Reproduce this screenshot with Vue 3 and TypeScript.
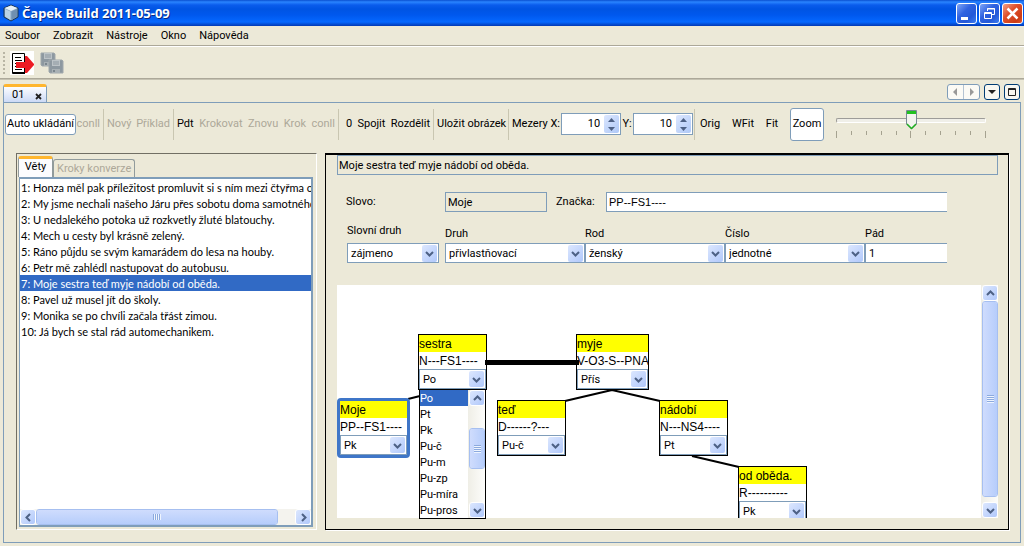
<script setup lang="ts">
import { ref } from 'vue'

interface Tool { label: string; enabled?: boolean; framed?: boolean }
interface ToolGroup { name: string; tools: Tool[] }
interface TreeNode { id: string; word: string; tag: string; role: string; x: number; y: number; wide?: boolean; selected?: boolean }

const menus = ['Soubor', 'Zobrazit', 'Nástroje', 'Okno', 'Nápověda']

const groups: ToolGroup[] = [
  { name: 'save', tools: [{ label: 'Auto ukládání', enabled: true, framed: true }, { label: 'conll' }] },
  { name: 'new', tools: [{ label: 'Nový' }, { label: 'Příklad' }] },
  { name: 'steps', tools: [{ label: 'Pdt', enabled: true }, { label: 'Krokovat' }, { label: 'Znovu' }, { label: 'Krok' }, { label: 'conll' }] },
  { name: 'join', tools: [{ label: '0', enabled: true }, { label: 'Spojit', enabled: true }, { label: 'Rozdělit', enabled: true }] },
  { name: 'image', tools: [{ label: 'Uložit obrázek', enabled: true }] },
]

const sentences = [
  'Honza měl pak příležitost promluvit si s ním mezi čtyřma oči',
  'My jsme nechali našeho Járu přes sobotu doma samotného',
  'U nedalekého potoka už rozkvetly žluté blatouchy.',
  'Mech u cesty byl krásně zelený.',
  'Ráno půjdu se svým kamarádem do lesa na houby.',
  'Petr mě zahlédl nastupovat do autobusu.',
  'Moje sestra teď myje nádobí od oběda.',
  'Pavel už musel jít do školy.',
  'Monika se po chvíli začala třást zimou.',
  'Já bych se stal rád automechanikem.',
]
const current = ref(6)

const categories = [
  { id: 'pos', label: 'Slovní druh', value: 'zájmeno' },
  { id: 'kind', label: 'Druh', value: 'přivlastňovací' },
  { id: 'gender', label: 'Rod', value: 'ženský' },
  { id: 'number', label: 'Číslo', value: 'jednotné' },
  { id: 'case', label: 'Pád', value: '1' },
]

const nodes: TreeNode[] = [
  { id: 'sestra', word: 'sestra', tag: 'N---FS1----', role: 'Po', x: 81, y: 49 },
  { id: 'myje', word: 'myje', tag: 'V-O3-S--PNA', role: 'Přís', x: 239, y: 49, wide: true },
  { id: 'moje', word: 'Moje', tag: 'PP--FS1----', role: 'Pk', x: 0, y: 113, selected: true },
  { id: 'ted', word: 'teď', tag: 'D------?---', role: 'Pu-č', x: 160, y: 115 },
  { id: 'nadobi', word: 'nádobí', tag: 'N---NS4----', role: 'Pt', x: 322, y: 115 },
  { id: 'obed', word: 'od oběda.', tag: 'R----------', role: 'Pk', x: 401, y: 181 },
]
const roles = ['Po', 'Pt', 'Pk', 'Pu-č', 'Pu-m', 'Pu-zp', 'Pu-míra', 'Pu-pros']
const role = ref('Po')

const gapX = ref('10')
const gapY = ref('10')
const zoom = ref(50)
</script>

<template>
  <div class="window">
    <header class="titlebar">
      <svg class="app-icon" viewBox="0 0 16 18" width="16" height="18" aria-hidden="true">
        <path d="M8 1 15 4V13L8 17 1 13V4Z" fill="#8ba9c4" stroke="#17324f" />
        <path d="M8 1.500 14.500 4 8 7 1.500 4Z" fill="#e8f2f8" />
        <path d="M2 5 7.500 7.500V16L2 12.500Z" fill="#b9d3e6" />
        <path d="M8.500 7.500 14 5V12.500L8.500 16Z" fill="#6f90b0" />
      </svg>
      <h1>Čapek Build 2011-05-09</h1>
      <div class="window-buttons">
        <button type="button" aria-label="Minimalizovat">
          <svg viewBox="0 0 19 19" width="19" height="19"><path d="M4 13h7v3H4z" fill="#fff" /></svg>
        </button>
        <button type="button" aria-label="Obnovit">
          <svg viewBox="0 0 19 19" width="19" height="19" fill="none" stroke="#fff">
            <path d="M7.500 7V4.500h7v6H12M7 5h8" /><path d="M4.500 8.500h7v6h-7zM4 9.500h8" />
          </svg>
        </button>
        <button type="button" class="close" aria-label="Zavřít">
          <svg viewBox="0 0 19 19" width="19" height="19"><path d="M4.500 4.500l10 10M14.500 4.500l-10 10" stroke="#fff" stroke-width="2.500" /></svg>
        </button>
      </div>
    </header>

    <nav class="menubar">
      <button v-for="m in menus" :key="m" type="button">{{ m }}</button>
    </nav>

    <div class="main-tools">
      <span class="grip"></span>
      <button type="button" aria-label="Export">
        <svg viewBox="0 0 24 24" width="24" height="24">
          <path d="M0 0h24v24H0z" fill="#fff" />
          <path d="M2.500 2.500h12v20h-12z" fill="#fff" stroke="#000" />
          <path d="M3 21.500h12M14.500 3v20" stroke="#000" />
          <path d="M5 6.500h6M5 9.500h7M5 12.500h3M5 15.500h3M5 18.500h7" stroke="#000" />
          <path d="M6 11h9V5h2l7 8v1l-7 8h-2v-5H6z" fill="#ed1c24" />
        </svg>
      </button>
      <button type="button" disabled aria-label="Uložit vše">
        <svg viewBox="0 0 24 24" width="24" height="24">
          <path d="M1 2h13l1 1v12H2l-1-1z" fill="#8d98a0" stroke="#a0a8ac" />
          <path d="M4 2h8v6H4z" fill="#bcc3c7" /><path d="M5 4h6M5 6h6" stroke="#8d98a0" />
          <path d="M4 11h8v4H4z" fill="#a9b1b5" /><path d="M5 12h2v2H5z" fill="#7b868e" />
          <path d="M9 9h13l1 1v12H10l-1-1z" fill="#8d98a0" stroke="#a0a8ac" />
          <path d="M12 9h8v6h-8z" fill="#bcc3c7" /><path d="M13 11h6M13 13h6" stroke="#8d98a0" />
          <path d="M12 18h8v4h-8z" fill="#a9b1b5" /><path d="M13 19h2v2h-2z" fill="#7b868e" />
        </svg>
      </button>
    </div>

    <main class="workspace">
      <div class="doc-tabs">
        <div class="doc-tab">
          <span>01</span>
          <button type="button" aria-label="Zavřít kartu">
            <svg viewBox="0 0 7 7" width="7" height="7"><path d="M1 1l5 5M6 1L1 6" stroke="#222" stroke-width="1.800" /></svg>
          </button>
        </div>
        <div class="tab-nav">
          <div class="pair">
            <button type="button" disabled aria-label="Předchozí"><svg viewBox="0 0 14 14" width="14" height="14"><path d="M9 3v8L5 7z" fill="#999" /></svg></button>
            <button type="button" disabled aria-label="Další"><svg viewBox="0 0 14 14" width="14" height="14"><path d="M6 3v8l4-4z" fill="#999" /></svg></button>
          </div>
          <button type="button" class="nav-button" aria-label="Seznam"><svg viewBox="0 0 14 14" width="14" height="14"><path d="M3 5h8l-4 4z" fill="#222" /></svg></button>
          <button type="button" class="nav-button" aria-label="Maximalizovat"><svg viewBox="0 0 14 14" width="14" height="14"><path d="M3.500 3.500h7v7h-7zM3 4.500h8" fill="none" stroke="#222" /></svg></button>
        </div>
      </div>

      <div class="document">
        <div class="tree-tools">
          <div v-for="g in groups" :key="g.name" class="group" :class="g.name">
            <button v-for="t in g.tools" :key="t.label" type="button" :disabled="!t.enabled" :class="{ framed: t.framed }">{{ t.label }}</button>
          </div>
          <div class="group spacing">
            <label for="gap-x">Mezery X:</label>
            <div class="spinner">
              <input id="gap-x" v-model="gapX" type="text">
              <div class="steppers">
                <button type="button" aria-label="Více"><svg viewBox="0 0 7 4" width="7" height="4"><path d="M3.500 0L7 4H0z" /></svg></button>
                <button type="button" aria-label="Méně"><svg viewBox="0 0 7 4" width="7" height="4"><path d="M0 0h7L3.500 4z" /></svg></button>
              </div>
            </div>
            <label for="gap-y">Y:</label>
            <div class="spinner">
              <input id="gap-y" v-model="gapY" type="text">
              <div class="steppers">
                <button type="button" aria-label="Více"><svg viewBox="0 0 7 4" width="7" height="4"><path d="M3.500 0L7 4H0z" /></svg></button>
                <button type="button" aria-label="Méně"><svg viewBox="0 0 7 4" width="7" height="4"><path d="M0 0h7L3.500 4z" /></svg></button>
              </div>
            </div>
          </div>
          <div class="group fit">
            <button type="button">Orig</button>
            <button type="button">WFit</button>
            <button type="button">Fit</button>
            <button type="button" class="framed tall">Zoom</button>
          </div>
          <div class="zoom">
            <input v-model="zoom" type="range" min="0" max="100" aria-label="Zoom">
            <div class="ticks"><i v-for="n in 11" :key="n" :class="{ major: n % 5 === 1 }"></i></div>
          </div>
        </div>

        <div class="panes">
          <section class="left-pane">
            <div class="side-tabs" role="tablist">
              <button type="button" role="tab" aria-selected="true" class="active">Věty</button>
              <button type="button" role="tab" disabled>Kroky konverze</button>
            </div>
            <div class="list-box">
              <ul>
                <li v-for="(s, i) in sentences" :key="i" :class="{ current: i === current }" @click="current = i">{{ i + 1 }}: {{ s }}</li>
              </ul>
              <div class="hscroll">
                <button type="button" class="arrow" aria-label="Vlevo"><svg viewBox="0 0 9 9" width="9" height="9"><path d="M6 1L2.500 4.500 6 8" /></svg></button>
                <div class="thumb"><i></i></div>
                <button type="button" class="arrow" aria-label="Vpravo"><svg viewBox="0 0 9 9" width="9" height="9"><path d="M3 1l3.500 3.500L3 8" /></svg></button>
              </div>
            </div>
          </section>

          <section class="right-pane">
            <input class="field sentence" type="text" readonly aria-label="Věta" :value="sentences[current]">
            <div class="word-row">
              <label for="word">Slovo:</label>
              <input id="word" class="field word" type="text" readonly value="Moje">
              <label for="tag">Značka:</label>
              <input id="tag" class="field tag-field" type="text" value="PP--FS1----">
            </div>
            <div class="category-row">
              <div v-for="c in categories" :key="c.id" class="category" :class="c.id">
                <label :for="c.id">{{ c.label }}</label>
                <div class="combo">
                  <select :id="c.id"><option>{{ c.value }}</option></select>
                  <span class="arrow"><svg viewBox="0 0 9 9" width="9" height="9"><path d="M1 3l3.500 3.500L8 3" /></svg></span>
                </div>
              </div>
            </div>

            <div class="canvas-row">
              <div class="canvas">
                <div class="drawing">
                  <svg class="edges" width="644" height="233" stroke="#000" stroke-width="2" fill="none">
                    <path d="M71 114l12-3M275 105l-47 11M275 105l48 11M355 171l47 11" />
                  </svg>
                  <div
                    v-for="n in nodes" :key="n.id" class="node" :class="{ wide: n.wide, selected: n.selected }"
                    :style="{ left: n.x + 'px', top: n.y + 'px' }"
                  >
                    <div class="node-word">{{ n.word }}</div>
                    <div class="node-tag">{{ n.tag }}</div>
                    <div class="combo">
                      <select :aria-label="n.word"><option>{{ n.role }}</option></select>
                      <span class="arrow"><svg viewBox="0 0 9 9" width="9" height="9"><path d="M1 3l3.500 3.500L8 3" /></svg></span>
                    </div>
                  </div>
                  <svg class="edges link" width="644" height="233" stroke="#000" stroke-width="5"><path d="M148 77.500h94" /></svg>
                </div>
              </div>
              <div class="popup">
                <ul role="listbox" aria-label="sestra">
                  <li v-for="r in roles" :key="r" role="option" :aria-selected="r === role" :class="{ current: r === role }" @click="role = r">{{ r }}</li>
                </ul>
                <div class="vscroll">
                  <button type="button" class="arrow" aria-label="Nahoru"><svg viewBox="0 0 9 9" width="9" height="9"><path d="M1 6l3.500-3.500L8 6" /></svg></button>
                  <div class="thumb"><i></i></div>
                  <button type="button" class="arrow" aria-label="Dolů"><svg viewBox="0 0 9 9" width="9" height="9"><path d="M1 3l3.500 3.500L8 3" /></svg></button>
                </div>
              </div>
              <div class="vscroll canvas-scroll">
                <button type="button" class="arrow" aria-label="Nahoru"><svg viewBox="0 0 9 9" width="9" height="9"><path d="M1 6l3.500-3.500L8 6" /></svg></button>
                <div class="thumb"><i></i></div>
                <button type="button" class="arrow" aria-label="Dolů"><svg viewBox="0 0 9 9" width="9" height="9"><path d="M1 3l3.500 3.500L8 3" /></svg></button>
              </div>
            </div>
          </section>
        </div>
      </div>
    </main>
  </div>
</template>

<style>
body { background: #ece9d8; }
</style>

<style scoped>
* { box-sizing: border-box; }
.window {
  min-height: 100vh;
  display: flex;
  flex-direction: column;
  background: #ece9d8;
  color: #000;
  font: 11px/18px Roboto, "Liberation Sans", sans-serif;
}
button, input, select { font: inherit; color: inherit; margin: 0; padding: 0; border: 0; border-radius: 0; background: none; }
button { white-space: nowrap; }
svg { display: block; }
ul { list-style: none; margin: 0; padding: 0; }

.titlebar {
  display: flex;
  align-items: center;
  height: 26px;
  padding: 0 1px 0 3px;
  background: linear-gradient(#0a4fd0 0, #2a84ff 2px, #0a5cec 5px, #0054e3 9px, #0058ee 15px, #0568ff 22px, #0450d8 24px, #0138b4 26px);
}
.titlebar h1 { flex: 1; margin: 0 0 0 3px; font: bold 13px/20px "Noto Sans", sans-serif; color: #fff; text-shadow: 1px 1px #0a2a80; }
.window-buttons { display: flex; gap: 2px; }
.window-buttons button { width: 21px; height: 21px; border: 1px solid #fff; border-radius: 3px; background: linear-gradient(135deg, #7fa6f8, #2f62e0 40%, #2458d8 70%, #3c7df0); }
.window-buttons .close { background: linear-gradient(135deg, #f0a088, #e0502c 40%, #cc3c14 80%, #e0582c); }

.menubar { display: flex; height: 20px; padding: 0 5px; border-bottom: 1px solid #aca899; }
.menubar button { height: 19px; padding-top: 1px; margin-right: 13px; }

.main-tools { display: flex; align-items: center; height: 33px; padding: 0 3px; border-top: 1px solid #fff; border-bottom: 1px solid #aca899; }
.grip { width: 2px; height: 22px; margin-right: 5px; background: repeating-linear-gradient(#b8b5a4 0 2px, transparent 2px 4px); }
.main-tools button { width: 24px; height: 24px; margin-right: 6px; }

.workspace { flex: 1; display: flex; flex-direction: column; padding: 4px 3px 3px; border-top: 1px solid #c5c2b2; }
.doc-tabs { display: flex; justify-content: space-between; height: 18px; }
.doc-tab { display: flex; align-items: center; gap: 11px; width: 44px; height: 18px; padding: 0 3px 0 8px; border: 1px solid #7f9db9; border-top: 3px solid #ffb62e; border-bottom: 0; border-radius: 3px 3px 0 0; background: linear-gradient(#fcfdff, #ccdaf6); }
.doc-tab button { width: 7px; }
.doc-tab button svg { margin-top: 3px; }
.tab-nav { display: flex; gap: 4px; height: 16px; margin-right: 1px; }
.pair { display: flex; width: 33px; border: 1px solid #7f9db9; border-radius: 3px; background: #fbfaf5; }
.pair button { flex: 1; }
.pair button + button { border-left: 1px solid #b4c3d2; }
.nav-button { width: 16px; border: 1px solid #003c74; border-radius: 3px; background: #f8f7f1; }

.document { flex: 1; display: flex; flex-direction: column; border: 1px solid #7f9db9; padding: 0 11px 12px 12px; }
.tree-tools { display: flex; align-items: center; height: 42px; margin: 0 -11px 8px -12px; }
.group { flex: none; display: flex; align-items: center; justify-content: space-between; height: 31px; padding: 0 3px; border-right: 1px solid #c9c6b1; }
.group button:disabled { color: #aca899; }
.save { width: 100px; padding-left: 1px; }
.new { width: 70px; }
.steps { width: 165px; }
.join { width: 95px; padding-left: 7px; }
.image { width: 75px; }
.framed { background: #fff; border: 1px solid #7f9db9; border-radius: 3px; }
.save .framed { width: 71px; height: 21px; }
.spacing { width: 186px; padding-right: 1px; }
.fit { width: 129px; padding: 0 0 0 5px; border: 0; }
.tall { width: 34px; height: 33px; }
.spinner { display: flex; width: 60px; height: 22px; border: 1px solid #7f9db9; background: #fff; }
.spinner input { flex: 1; min-width: 0; text-align: right; padding-right: 3px; }
.steppers { display: flex; flex-direction: column; width: 15px; margin: 1px; border-radius: 2px; background: linear-gradient(135deg, #dce7fe, #aec8f7); }
.steppers button { flex: 1; display: grid; place-items: center; fill: #4d6185; }
.zoom { width: 150px; margin-left: 12px; }
.zoom input { display: block; width: 100%; height: 22px; appearance: none; }
.zoom input::-webkit-slider-runnable-track { height: 5px; border: 1px solid #fff; border-top-color: #9d9c99; border-left-color: #9d9c99; border-radius: 2px; background: #f0efe8; }
.zoom input::-webkit-slider-thumb {
  appearance: none;
  width: 11px;
  height: 20px;
  margin-top: -9px;
  background: url("data:image/svg+xml,%3Csvg xmlns='http://www.w3.org/2000/svg' width='11' height='20'%3E%3Cpath d='M.5.500h10V14l-5 5-5-5z' fill='%23f3f3ef' stroke='%23778892'/%3E%3Cpath d='M1 1h9v3H1z' fill='%2321c121'/%3E%3Cpath d='M1 14l4.500 4.500L10 14' fill='none' stroke='%2321b121' stroke-width='1.500'/%3E%3C/svg%3E");
}
.ticks { display: flex; justify-content: space-between; height: 8px; }
.ticks i { width: 1px; height: 4px; background: #a5a290; }
.ticks .major { height: 7px; }

.panes { flex: 1; display: flex; gap: 8px; }
.left-pane { flex: none; width: 301px; display: flex; flex-direction: column; padding: 1px 3px 2px 1px; border: 1px solid; border-color: #716f64 #fff #fff #716f64; }
.side-tabs { display: flex; align-items: flex-end; height: 22px; }
.side-tabs button { height: 18px; padding: 0 3px; border: 1px solid #919b9c; border-bottom: 0; border-radius: 3px 3px 0 0; color: #aca899; line-height: 16px; }
.side-tabs .active { width: 35px; height: 21px; padding-bottom: 2px; border-top: 3px solid #ffb62e; background: #fcfcfe; color: #000; }
.list-box { flex: 1; display: flex; flex-direction: column; margin-left: 1px; border: 1px solid #7f9db9; border-right-width: 2px; border-bottom-width: 2px; background: #fff; border-top-width: 2px; }
.list-box ul { flex: 1; overflow: hidden; font-family: Lato, Roboto, sans-serif; }
li { height: 16px; padding-left: 1px; line-height: 17px; white-space: nowrap; }
.current { background: #316ac5; color: #fff; }

.arrow { display: grid; place-items: center; border: 1px solid #fff; border-radius: 3px; background: linear-gradient(135deg, #dce7fe, #b0c8fb); }
.arrow svg { fill: none; stroke: #4d6185; stroke-width: 2; }
.thumb { display: grid; place-items: center; border: 1px solid #fff; border-radius: 3px; outline: 1px solid #a6bff0; outline-offset: -1px; background: #c6d6fc; }
.hscroll { display: flex; height: 16px; background: #f4f3ee; }
.hscroll .arrow, .vscroll .arrow { flex: none; width: 16px; height: 16px; }
.hscroll .thumb { flex: 1; margin-right: 17px; background: linear-gradient(#cfdcfd, #b6cdfb); }
.hscroll .thumb i { width: 8px; height: 6px; background: repeating-linear-gradient(90deg, #8caade 0 1px, #eef4fe 1px 2px); }
.vscroll { display: flex; flex-direction: column; width: 17px; padding-left: 1px; background: linear-gradient(90deg, #efeee6, #fdfdfb); }
.vscroll .thumb { background: linear-gradient(90deg, #cfdcfd, #b6cdfb); }
.vscroll .thumb i { width: 7px; height: 8px; background: repeating-linear-gradient(#8caade 0 1px, #eef4fe 1px 2px); }

.right-pane { flex: 1; min-width: 0; display: flex; flex-direction: column; padding: 0 10px 11px 11px; border: 1px solid #000; border-top-width: 2px; box-shadow: 1px 1px #fff; }
.field { height: 20px; padding: 0 2px; border: 1px solid #7f9db9; background: #fff; }
.field:read-only { background: transparent; }
.sentence { width: 100%; padding: 0 1px; }
.word-row { display: flex; align-items: center; margin: 17px 51px 10px 9px; }
.word-row label { width: 99px; }
.word-row label + .word { width: 102px; margin-right: 9px; }
.word-row .word + label { width: 50px; }
.tag-field { flex: 1; border-right: 0; font-family: "Liberation Sans", Arial, sans-serif; }
.category-row { display: flex; align-items: flex-end; margin: 0 51px 22px 10px; }
.category { display: flex; flex-direction: column; width: 140px; }
.category label { height: 18px; }
.category.pos { width: 92px; margin-right: 6px; }
.category.pos label { height: 21px; }
.category.case { flex: 1; }
.case .combo { border-right: 0; }
.case .arrow { display: none; }
.combo { display: grid; grid-template-columns: 1fr 15px; height: 20px; border: 1px solid #7f9db9; background: #fff; }
.combo select { grid-area: 1 / 1 / 2 / 3; min-width: 0; padding: 1px 15px 0 3px; appearance: none; }
.combo .arrow { grid-area: 1 / 2; margin: 1px 1px 1px -1px; border: 0; border-radius: 2px; pointer-events: none; }

.canvas-row { flex: 1; display: flex; position: relative; min-height: 233px; }
.canvas { flex: 1; display: flex; min-width: 0; overflow: hidden; background: #fff; }
.drawing { flex: 1; position: relative; overflow: hidden; }
.edges { position: absolute; left: 0; top: 0; }
.link { pointer-events: none; }
.node { position: absolute; width: 69px; border: 1px solid #000; background: #fff; font: 12px/18px "Liberation Sans", Arial, sans-serif; }
.node.wide { width: 73px; }
.node.selected { width: 73px; border: 3px solid #3f76c8; border-radius: 4px; }
.node-word { height: 17px; background: #ff0; }
.node-tag { height: 17px; white-space: nowrap; overflow: hidden; }
.node .combo { font: 11px/16px Roboto, "Liberation Sans", sans-serif; }
.popup { position: absolute; left: 82px; top: 105px; display: flex; width: 67px; height: 129px; border: 1px solid #000; border-top: 0; background: #fff; }
.popup ul { flex: 1; }
.popup li { padding: 0; }
.popup .thumb { height: 41px; margin: 22px 0 33px; }
.canvas-scroll .thumb { flex: 1; margin-bottom: 5px; }
</style>
